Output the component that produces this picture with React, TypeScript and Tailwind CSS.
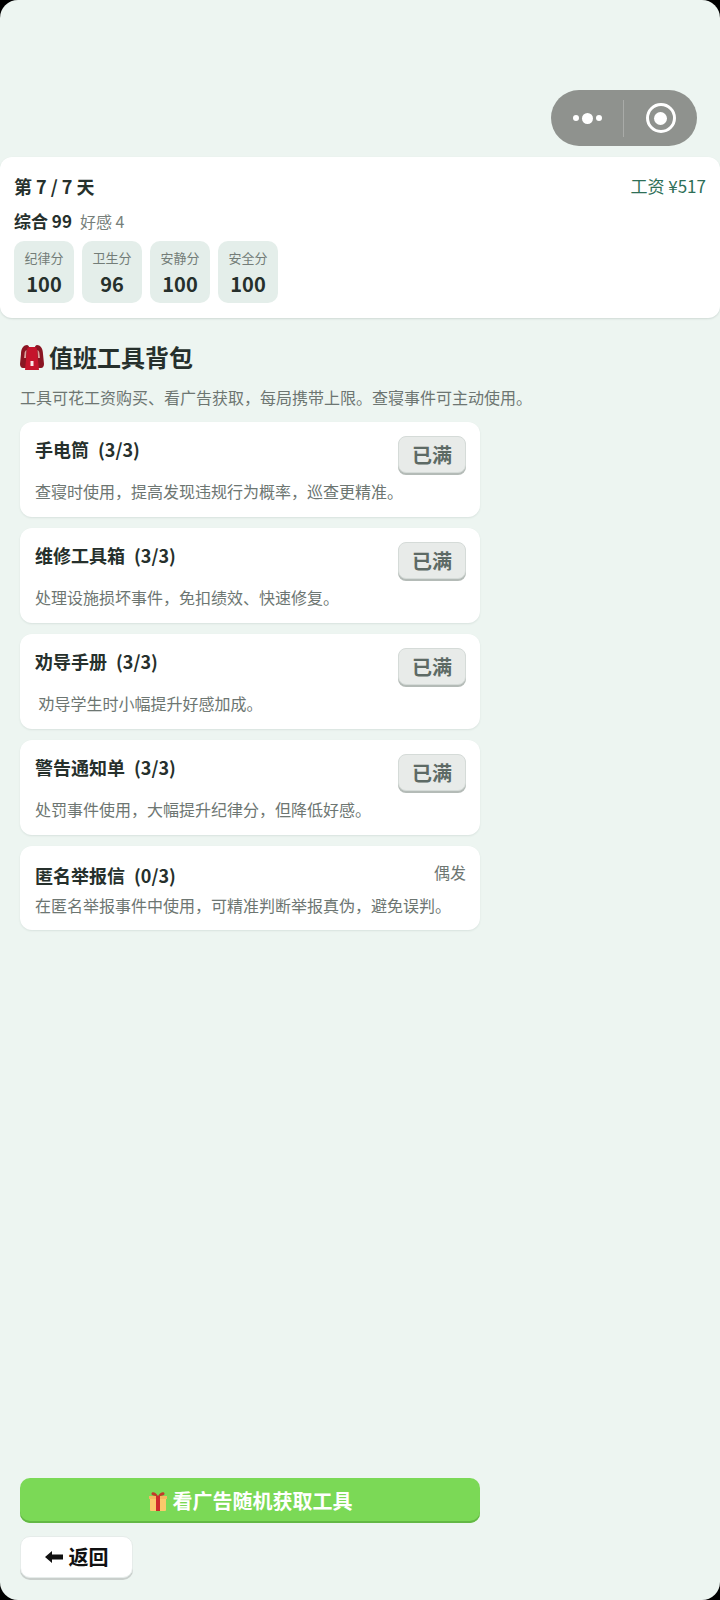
import React from "react";

const font = { fontFamily: '"Noto Sans CJK SC", "Noto Sans", sans-serif' };

const stats = [
  { label: "纪律分", value: 100 },
  { label: "卫生分", value: 96 },
  { label: "安静分", value: 100 },
  { label: "安全分", value: 100 },
];

const tools = [
  { name: "手电筒", count: "(3/3)", desc: "查寝时使用，提高发现违规行为概率，巡查更精准。", full: true },
  { name: "维修工具箱", count: "(3/3)", desc: "处理设施损坏事件，免扣绩效、快速修复。", full: true },
  { name: "劝导手册", count: "(3/3)", desc: " 劝导学生时小幅提升好感加成。", full: true },
  { name: "警告通知单", count: "(3/3)", desc: "处罚事件使用，大幅提升纪律分，但降低好感。", full: true },
  { name: "匿名举报信", count: "(0/3)", desc: "在匿名举报事件中使用，可精准判断举报真伪，避免误判。", full: false },
];

function Backpack() {
  return (
    <svg width="24" height="25" viewBox="0 0 24 25" className="shrink-0">
      <path d="M1 9C1 3 4 0 7 0c1 0 2 1 2 2h6c0-1 1-2 2-2 3 0 6 3 6 9l1 10c0 2-1 4-3 4H3c-2 0-3-2-3-4z" fill="#8a1522" />
      <path d="M4 13l.5-4c0-2 .5-3 2-4L6 13z" fill="#d9a09c" />
      <path d="M20 13l-.5-4c0-2-.5-3-2-4L18 13z" fill="#d9a09c" />
      <path d="M7 5c0-2 1-3 3-3h4c2 0 3 1 3 3l2 20H5z" fill="#c5142c" />
      <rect x="10.500" y="16" width="3" height="5" fill="#f8e8e8" />
    </svg>
  );
}

function Gift() {
  return (
    <svg width="20" height="20" viewBox="0 0 20 20" className="shrink-0">
      <rect x="2" y="6" width="16" height="14" rx="1" fill="#fbc96b" />
      <rect x="1" y="5" width="18" height="3" fill="#f4b860" />
      <rect x="8" y="5" width="4" height="15" fill="#cf2b2b" />
      <path d="M10 5C8 1 4 0 3.500 2.500 3 4.500 7 5 10 5zM10 5c2-4 6-5 6.500-2.500C17 4.500 13 5 10 5z" fill="#c23a2a" />
    </svg>
  );
}

function BackArrow() {
  return (
    <svg width="18" height="12" viewBox="0 0 18 12" className="shrink-0">
      <path d="M0 6l7-6v3.500h11v5H7V12z" fill="#111" />
    </svg>
  );
}

function Capsule() {
  return (
    <div className="flex h-[56px] w-[146px] items-center rounded-full bg-[#8f928e]">
      <div className="flex w-[72px] items-center justify-center gap-[3px]">
        <span className="h-[6px] w-[6px] rounded-full bg-white" />
        <span className="h-[11px] w-[11px] rounded-full bg-white" />
        <span className="h-[6px] w-[6px] rounded-full bg-white" />
      </div>
      <div className="h-[37px] w-px bg-[#a9aba8]" />
      <div className="flex flex-1 items-center justify-center">
        <div className="flex h-[30px] w-[30px] items-center justify-center rounded-full border-[3px] border-white">
          <span className="h-[13px] w-[13px] rounded-full bg-white" />
        </div>
      </div>
    </div>
  );
}

function ToolCard({ name, count, desc, full }: { name: string; count: string; desc: string; full: boolean }) {
  return (
    <div className={`w-[460px] rounded-[12px] bg-white pt-[14px] pr-[14px] pl-[15px] shadow-[0_1px_2px_rgba(40,70,60,0.1)] ${full ? "pb-[14px]" : "pb-[13px]"}`}>
      <div className={`flex items-start justify-between ${full ? "h-[43px]" : "h-[33px]"}`}>
        <span className={`text-[18px] leading-[24px] font-bold text-[#26302c] ${full ? "pt-[1px]" : "pt-[3px]"}`}>
          {name}
          <span className="ml-[9px]">{count}</span>
        </span>
        {full ? (
          <div className="flex h-[37px] w-[68px] items-center justify-center rounded-[8px] border border-[#d5dbd8] bg-[#e8ebe9] text-[20px] font-bold text-[#5d6a65] shadow-[0_2px_0_#b4bbb7]">
            已满
          </div>
        ) : (
          <span className="pt-[1px] text-[16px] leading-[22px] text-[#6d7672]">偶发</span>
        )}
      </div>
      <p className="text-[16px] leading-[24px] whitespace-pre text-[#6d7672]">{desc}</p>
    </div>
  );
}

export default function App() {
  return (
    <div className="bg-black" style={font}>
      <div className="flex h-[1600px] w-[720px] flex-col overflow-hidden rounded-[18px] bg-[#edf5f1]">
        <div className="flex h-[157px] shrink-0 justify-end pt-[90px] pr-[23px]">
          <Capsule />
        </div>

        <div className="h-[161px] shrink-0 rounded-[12px] bg-white px-[14px] pt-[15px] shadow-[0_1px_2px_rgba(40,70,60,0.15)]">
          <div className="flex h-[28px] items-center justify-between">
            <span className="text-[18px] font-bold text-[#26302c]">第 7 / 7 天</span>
            <span className="text-[17px] text-[#2e6f57]">工资 ¥517</span>
          </div>
          <div className="mt-[8px] flex h-[26px] items-center gap-[8px]">
            <span className="text-[17px] font-bold text-[#26302c]">综合 99</span>
            <span className="text-[16px] text-[#777f7b]">好感 4</span>
          </div>
          <div className="mt-[7px] flex gap-[8px]">
            {stats.map((s) => (
              <div key={s.label} className="flex h-[62px] w-[60px] flex-col items-center rounded-[10px] bg-[#e4eeea] pt-[7px]">
                <span className="text-[13px] leading-[20px] text-[#737d78]">{s.label}</span>
                <span className="mt-[1px] text-[20px] leading-[30px] font-bold text-[#26302c]">{s.value}</span>
              </div>
            ))}
          </div>
        </div>

        <div className="flex flex-1 flex-col px-[20px]">
          <div className="mt-[22px] flex h-[34px] items-center gap-[5px]">
            <Backpack />
            <h1 className="text-[24px] font-bold text-[#26302c]">值班工具背包</h1>
          </div>
          <p className="mt-[10px] h-[27px] text-[16px] leading-[27px] text-[#6d7672]">
            工具可花工资购买、看广告获取，每局携带上限。查寝事件可主动使用。
          </p>
          <div className="mt-[11px] flex flex-col gap-[11px]">
            {tools.map((t) => (
              <ToolCard key={t.name} {...t} />
            ))}
          </div>

          <div className="mt-auto pb-[22px]">
            <button className="flex h-[45px] w-[460px] items-center justify-center gap-[5px] rounded-[10px] bg-[#7bd956] text-[20px] font-bold text-white shadow-[inset_0_-2px_0_#63b845]">
              <Gift />
              看广告随机获取工具
            </button>
            <button className="mt-[13px] flex h-[42px] w-[113px] items-center justify-center gap-[6px] rounded-[10px] border border-[#e6ecea] bg-white text-[20px] font-bold text-[#111] shadow-[0_2px_0_#c9cfcc]">
              <BackArrow />
              返回
            </button>
          </div>
        </div>
      </div>
    </div>
  );
}
